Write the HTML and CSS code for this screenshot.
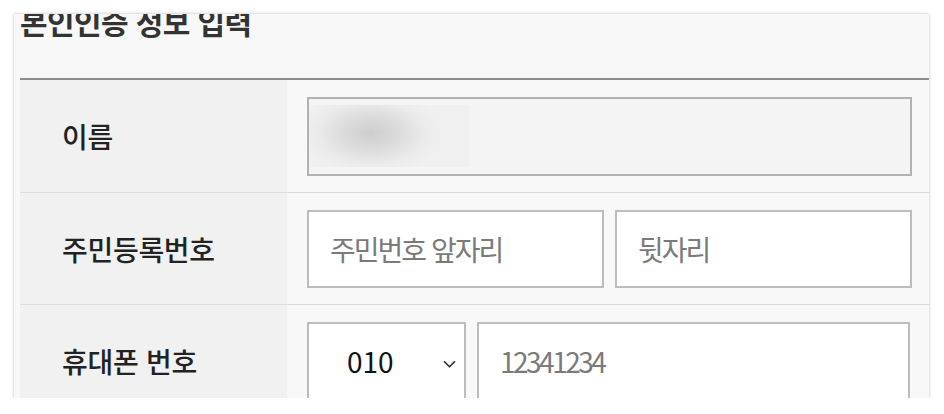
FILE: index.html
```html
<!DOCTYPE html>
<html lang="ko">
<head>
    <meta charset="UTF-8">
    <meta name="viewport" content="width=device-width, initial-scale=1.0">
    <title>본인인증 정보 입력</title>
    <link rel="stylesheet" href="styles.css">
</head>
<body>
<div class="page">
    <div class="card">
        <h2 class="card-title">본인인증 정보 입력</h2>

        <div class="form-table">
            <div class="form-row">
                <div class="form-label">이름</div>
                <div class="form-field">
                    <div class="readonly-box"><div class="blur-mask"></div></div>
                </div>
            </div>

            <div class="form-row">
                <div class="form-label">주민등록번호</div>
                <div class="form-field">
                    <input class="text-input" type="text" placeholder="주민번호 앞자리">
                    <input class="text-input" type="password" placeholder="뒷자리">
                </div>
            </div>

            <div class="form-row">
                <div class="form-label">휴대폰 번호</div>
                <div class="form-field phone-field">
                    <div class="select-box">
                        <span class="select-value">010</span>
                        <svg class="select-arrow" width="13" height="8" viewBox="0 0 13 8">
                            <path d="M1 1.2 L6.5 6.7 L12 1.2" fill="none" stroke="#222" stroke-width="1.5"/>
                        </svg>
                    </div>
                    <input class="text-input num-input" type="tel" placeholder="12341234">
                </div>
            </div>
        </div>
    </div>
</div>
</body>
</html>
```

FILE: styles.css
```css
body{margin: 0;background: #fff;font-family: "Noto Sans CJK KR","Noto Sans",sans-serif;}

.page{padding: 14px 15px 0 14px;}
.card{height: 384px;overflow: hidden;background: #f8f8f8;box-shadow: 0 0 3px rgba(0,0,0,.28);padding-left: 6px;}

.card-title{margin: -9px 0 0;height: 73px;border-bottom: 2px solid #8c8c8c;font-size: 30px;line-height: 32px;font-weight: 700;color: #333;letter-spacing: -0.6px;}

.form-row{display: flex;border-bottom: 1px solid #dcdcdc;}
.form-label{width: 267px;flex-shrink: 0;box-sizing: border-box;padding-left: 42px;display: flex;align-items: center;background: #f1f1f1;font-size: 28px;font-weight: 500;color: #222;letter-spacing: -0.3px;}
.form-field{flex: 1;min-width: 0;display: flex;gap: 11px;padding: 17px 17px 16px 20px;}
.phone-field{padding-right: 19px;}

.readonly-box{flex: 1;height: 79px;box-sizing: border-box;border: 2px solid #b2b2b2;background: #f4f4f4;padding-top: 6px;}
.blur-mask{width: 160px;height: 62px;background: radial-gradient(ellipse 72px 42px at 62px 28px,#cdcdcd,#dcdcdc 40%,#ebebeb 75%,#f0f0f0);}

.text-input{flex: 1;width: 0;min-width: 0;height: 78px;box-sizing: border-box;margin: 0;border: 2px solid #bcbcbc;background: #fff;padding: 0 21px;font-family: "Noto Sans CJK KR","Noto Sans",sans-serif;font-size: 28px;letter-spacing: -2px;color: #333;outline: none;}
.text-input::placeholder{color: #7a7a7a;}
.num-input{letter-spacing: -2.5px;}

.select-box{width: 159px;flex-shrink: 0;height: 78px;box-sizing: border-box;border: 2px solid #bcbcbc;background: #fff;display: flex;align-items: center;justify-content: space-between;padding: 0 8px 0 38px;}
.select-value{font-size: 28px;color: #111;}
.select-arrow{margin-top: 5px;}
```
